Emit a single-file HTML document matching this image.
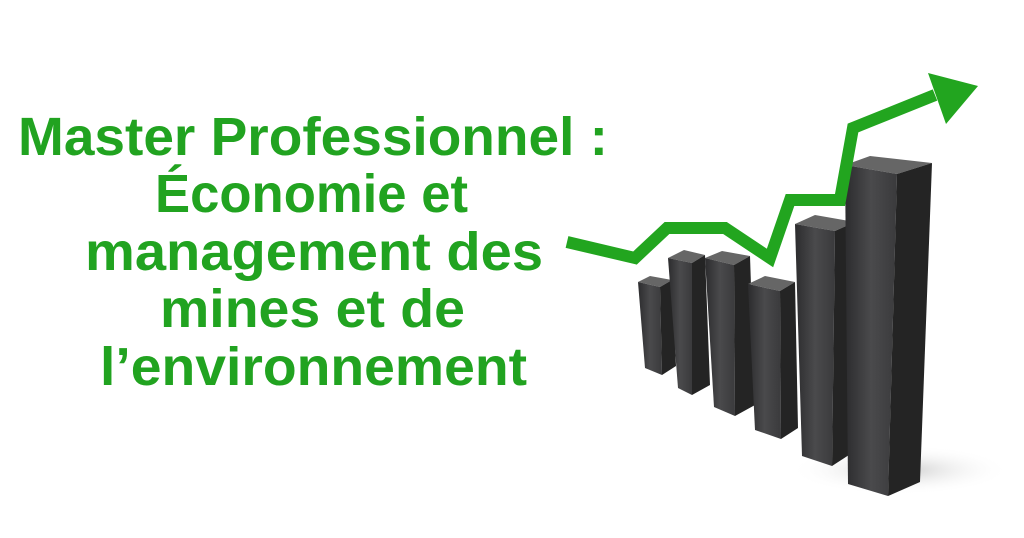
<!DOCTYPE html>
<html><head><meta charset="utf-8"><style>
html,body{margin:0;padding:0;background:#fff;width:1024px;height:538px;overflow:hidden}
svg{display:block}
text{font-family:"Liberation Sans",sans-serif;font-weight:bold;fill:#21a320;font-size:54px}
</style></head><body>
<svg width="1024" height="538" viewBox="0 0 1024 538">
<defs>
<linearGradient id="f" x1="0" x2="1"><stop offset="0" stop-color="#2c2c2e"/><stop offset=".5" stop-color="#4a4a4c"/><stop offset="1" stop-color="#3a3a3c"/></linearGradient>
<radialGradient id="sh" cx=".5" cy=".5" r=".5"><stop offset="0" stop-color="#ccc"/><stop offset="1" stop-color="#fff" stop-opacity="0"/></radialGradient>
</defs>
<text x="18" y="155" textLength="590" lengthAdjust="spacingAndGlyphs">Master Professionnel :</text>
<text x="155" y="212" textLength="313" lengthAdjust="spacingAndGlyphs">Économie et</text>
<text x="85" y="270" textLength="458" lengthAdjust="spacingAndGlyphs">management des</text>
<text x="160" y="327" textLength="305" lengthAdjust="spacingAndGlyphs">mines et de</text>
<text x="100" y="385" textLength="427" lengthAdjust="spacingAndGlyphs">l’environnement</text>
<ellipse cx="900" cy="470" rx="110" ry="25" fill="url(#sh)"/>
<g>
<!-- bar1 -->
<polygon points="638,282 650,276 672,280 660,287" fill="#666"/>
<polygon points="638,282 660,287 662,375 645,368" fill="url(#f)"/>
<polygon points="660,287 672,280 676,366 662,375" fill="#242424"/>
<!-- bar2 -->
<polygon points="668,258 684,250 705,255 692,263" fill="#666"/>
<polygon points="668,258 692,263 692,395 678,388" fill="url(#f)"/>
<polygon points="692,263 705,255 710,385 692,395" fill="#242424"/>
<!-- bar3 -->
<polygon points="705,258 722,251 750,256 734,265" fill="#666"/>
<polygon points="705,258 734,265 735,416 714,407" fill="url(#f)"/>
<polygon points="734,265 750,256 755,405 735,416" fill="#242424"/>
<!-- bar4 -->
<polygon points="748,284 765,276 795,282 780,291" fill="#666"/>
<polygon points="748,284 780,291 781,439 755,430" fill="url(#f)"/>
<polygon points="780,291 795,282 798,428 781,439" fill="#242424"/>
<!-- bar5 -->
<polygon points="795,224 815,215 855,222 835,231" fill="#666"/>
<polygon points="795,224 835,231 832,466 802,456" fill="url(#f)"/>
<polygon points="835,231 855,222 852,453 832,466" fill="#242424"/>
<!-- bar6 -->
<polygon points="845,165 870,156 932,163 897,174" fill="#666"/>
<polygon points="845,165 897,174 888,496 848,484" fill="url(#f)"/>
<polygon points="897,174 932,163 920,482 888,496" fill="#242424"/>
</g>
<polyline points="567,242 635,258 667,228 725,228 770,258 790,200 840,200 853,128 935,95" fill="none" stroke="#22a51f" stroke-width="12" stroke-linejoin="miter"/>
<polygon points="928,73 978,86 946,124" fill="#22a51f"/>
</svg>
</body></html>
